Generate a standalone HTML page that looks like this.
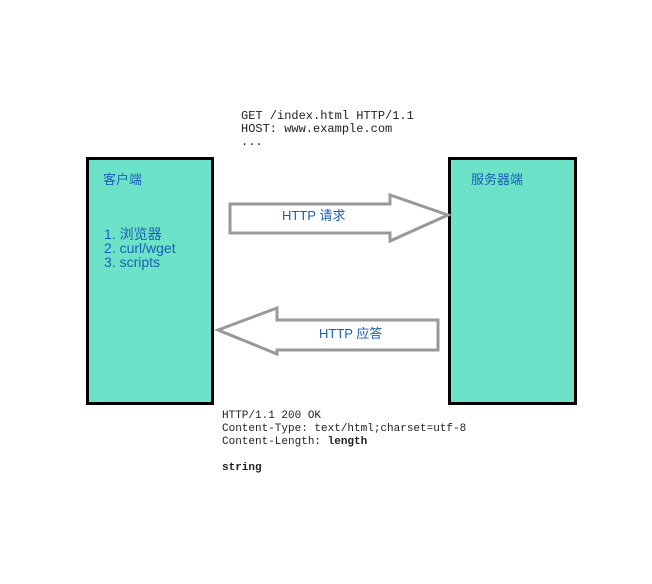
<!DOCTYPE html>
<html><head><meta charset="utf-8"><style>
body{margin:0;width:652px;height:584px;background:#fff;position:relative;overflow:hidden}
.box{position:absolute;background:#6ce2c9;border:3px solid #000;box-sizing:border-box}
.t{position:absolute;font-family:"Liberation Sans","Noto Sans CJK SC",sans-serif;color:#1a5fb4;font-size:13px;line-height:13px}
.m{position:absolute;font-family:"Liberation Mono",monospace;font-size:11px;line-height:13px;color:#222;white-space:pre}
</style></head><body>
<div class="m" style="left:241px;top:110px;font-size:12px">GET /index.html HTTP/1.1
HOST: www.example.com
...</div>
<div class="box" style="left:86px;top:157px;width:128px;height:248px"></div>
<div class="box" style="left:448px;top:157px;width:129px;height:248px"></div>
<div class="t" style="left:103px;top:173px">客户端</div>
<div class="t" style="left:471px;top:173px">服务器端</div>
<div class="t" style="left:104px;top:227px;font-size:14px;line-height:14px">1. 浏览器<br>2. curl/wget<br>3. scripts</div>
<svg style="position:absolute;left:0;top:0" width="652" height="584">
<polygon points="230,204 390,204 390,195 448,215 390,241 390,233 230,233" fill="#fff" stroke="#999" stroke-width="3"/>
<polygon points="438,320 277,320 277,308 218,330 277,354 277,350 438,350" fill="#fff" stroke="#999" stroke-width="3"/>
</svg>
<div class="t" style="left:282px;top:209px">HTTP 请求</div>
<div class="t" style="left:319px;top:327px">HTTP 应答</div>
<div class="m" style="left:222px;top:410px">HTTP/1.1 200 OK
Content-Type: text/html;charset=utf-8
Content-Length: <b>length</b>

<b>string</b></div>
</body></html>
